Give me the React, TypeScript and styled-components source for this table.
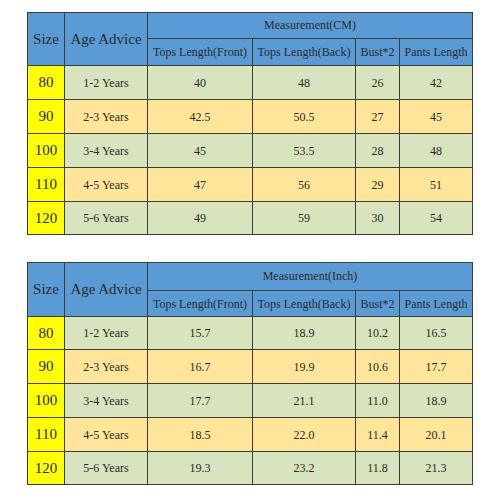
import React from "react";
import styled, { createGlobalStyle } from "styled-components";

const Global = createGlobalStyle`
  html, body { margin: 0; padding: 0; background: #ffffff; }
  body { font-family: "Liberation Serif", "Times New Roman", serif; color: #222; }
`;

const Page = styled.div`
  width: 500px;
  height: 500px;
  box-sizing: border-box;
  padding: 12px 0 0 27px;
  display: flex;
  flex-direction: column;
  gap: 27px;
  background: #fff;
`;

const Table = styled.div<{ $rows: string }>`
  display: grid;
  grid-template-columns: 36px 82px 104px 102px 43px 72px;
  grid-template-rows: ${(p) => p.$rows};
  gap: 1px;
  padding: 1px;
  width: max-content;
  background: #3c3c38;
`;

const Cell = styled.div<{ $bg: string; $size?: number; $span?: string }>`
  background: ${(p) => p.$bg};
  display: flex;
  align-items: center;
  justify-content: center;
  font-size: ${(p) => p.$size ?? 12}px;
  line-height: 1;
  white-space: nowrap;
  color: #2a2a2a;
  grid-row: ${(p) => p.$span ?? "auto"};
`;

const HeadCell = styled(Cell)``;

const Measure = styled.div`
  grid-column: 3 / span 4;
  background: #5b9bd5;
  display: flex;
  align-items: center;
  justify-content: center;
  font-size: 12px;
  color: #2a2a2a;
`;

const BLUE = "#5b9bd5";
const YELLOW = "#ffff00";
const GREEN = "#d7e4bd";
const PEACH = "#ffe599";

type Row = [string, string, string, string, string, string];

const cmRows: Row[] = [
  ["80", "1-2 Years", "40", "48", "26", "42"],
  ["90", "2-3 Years", "42.5", "50.5", "27", "45"],
  ["100", "3-4 Years", "45", "53.5", "28", "48"],
  ["110", "4-5 Years", "47", "56", "29", "51"],
  ["120", "5-6 Years", "49", "59", "30", "54"],
];

const inchRows: Row[] = [
  ["80", "1-2 Years", "15.7", "18.9", "10.2", "16.5"],
  ["90", "2-3 Years", "16.7", "19.9", "10.6", "17.7"],
  ["100", "3-4 Years", "17.7", "21.1", "11.0", "18.9"],
  ["110", "4-5 Years", "18.5", "22.0", "11.4", "20.1"],
  ["120", "5-6 Years", "19.3", "23.2", "11.8", "21.3"],
];

function SizeTable({ unit, rows, heights }: { unit: string; rows: Row[]; heights: string }) {
  return (
    <Table $rows={heights}>
      <HeadCell $bg={BLUE} $size={15} $span="1 / span 2">Size</HeadCell>
      <HeadCell $bg={BLUE} $size={15} $span="1 / span 2">Age Advice</HeadCell>
      <Measure>Measurement({unit})</Measure>
      <HeadCell $bg={BLUE}>Tops Length(Front)</HeadCell>
      <HeadCell $bg={BLUE}>Tops Length(Back)</HeadCell>
      <HeadCell $bg={BLUE}>Bust*2</HeadCell>
      <HeadCell $bg={BLUE}>Pants Length</HeadCell>
      {rows.map((r, i) => {
        const bg = i % 2 === 0 ? GREEN : PEACH;
        return (
          <React.Fragment key={r[0]}>
            <Cell $bg={YELLOW} $size={15}>{r[0]}</Cell>
            {r.slice(1).map((v, j) => (
              <Cell key={j} $bg={bg}>{v}</Cell>
            ))}
          </React.Fragment>
        );
      })}
    </Table>
  );
}

export default function App() {
  return (
    <Page>
      <Global />
      <SizeTable unit="CM" rows={cmRows} heights="25px 26px 33px 33px 33px 33px 32px" />
      <SizeTable unit="Inch" rows={inchRows} heights="27px 25px 32px 33px 33px 33px 32px" />
    </Page>
  );
}
